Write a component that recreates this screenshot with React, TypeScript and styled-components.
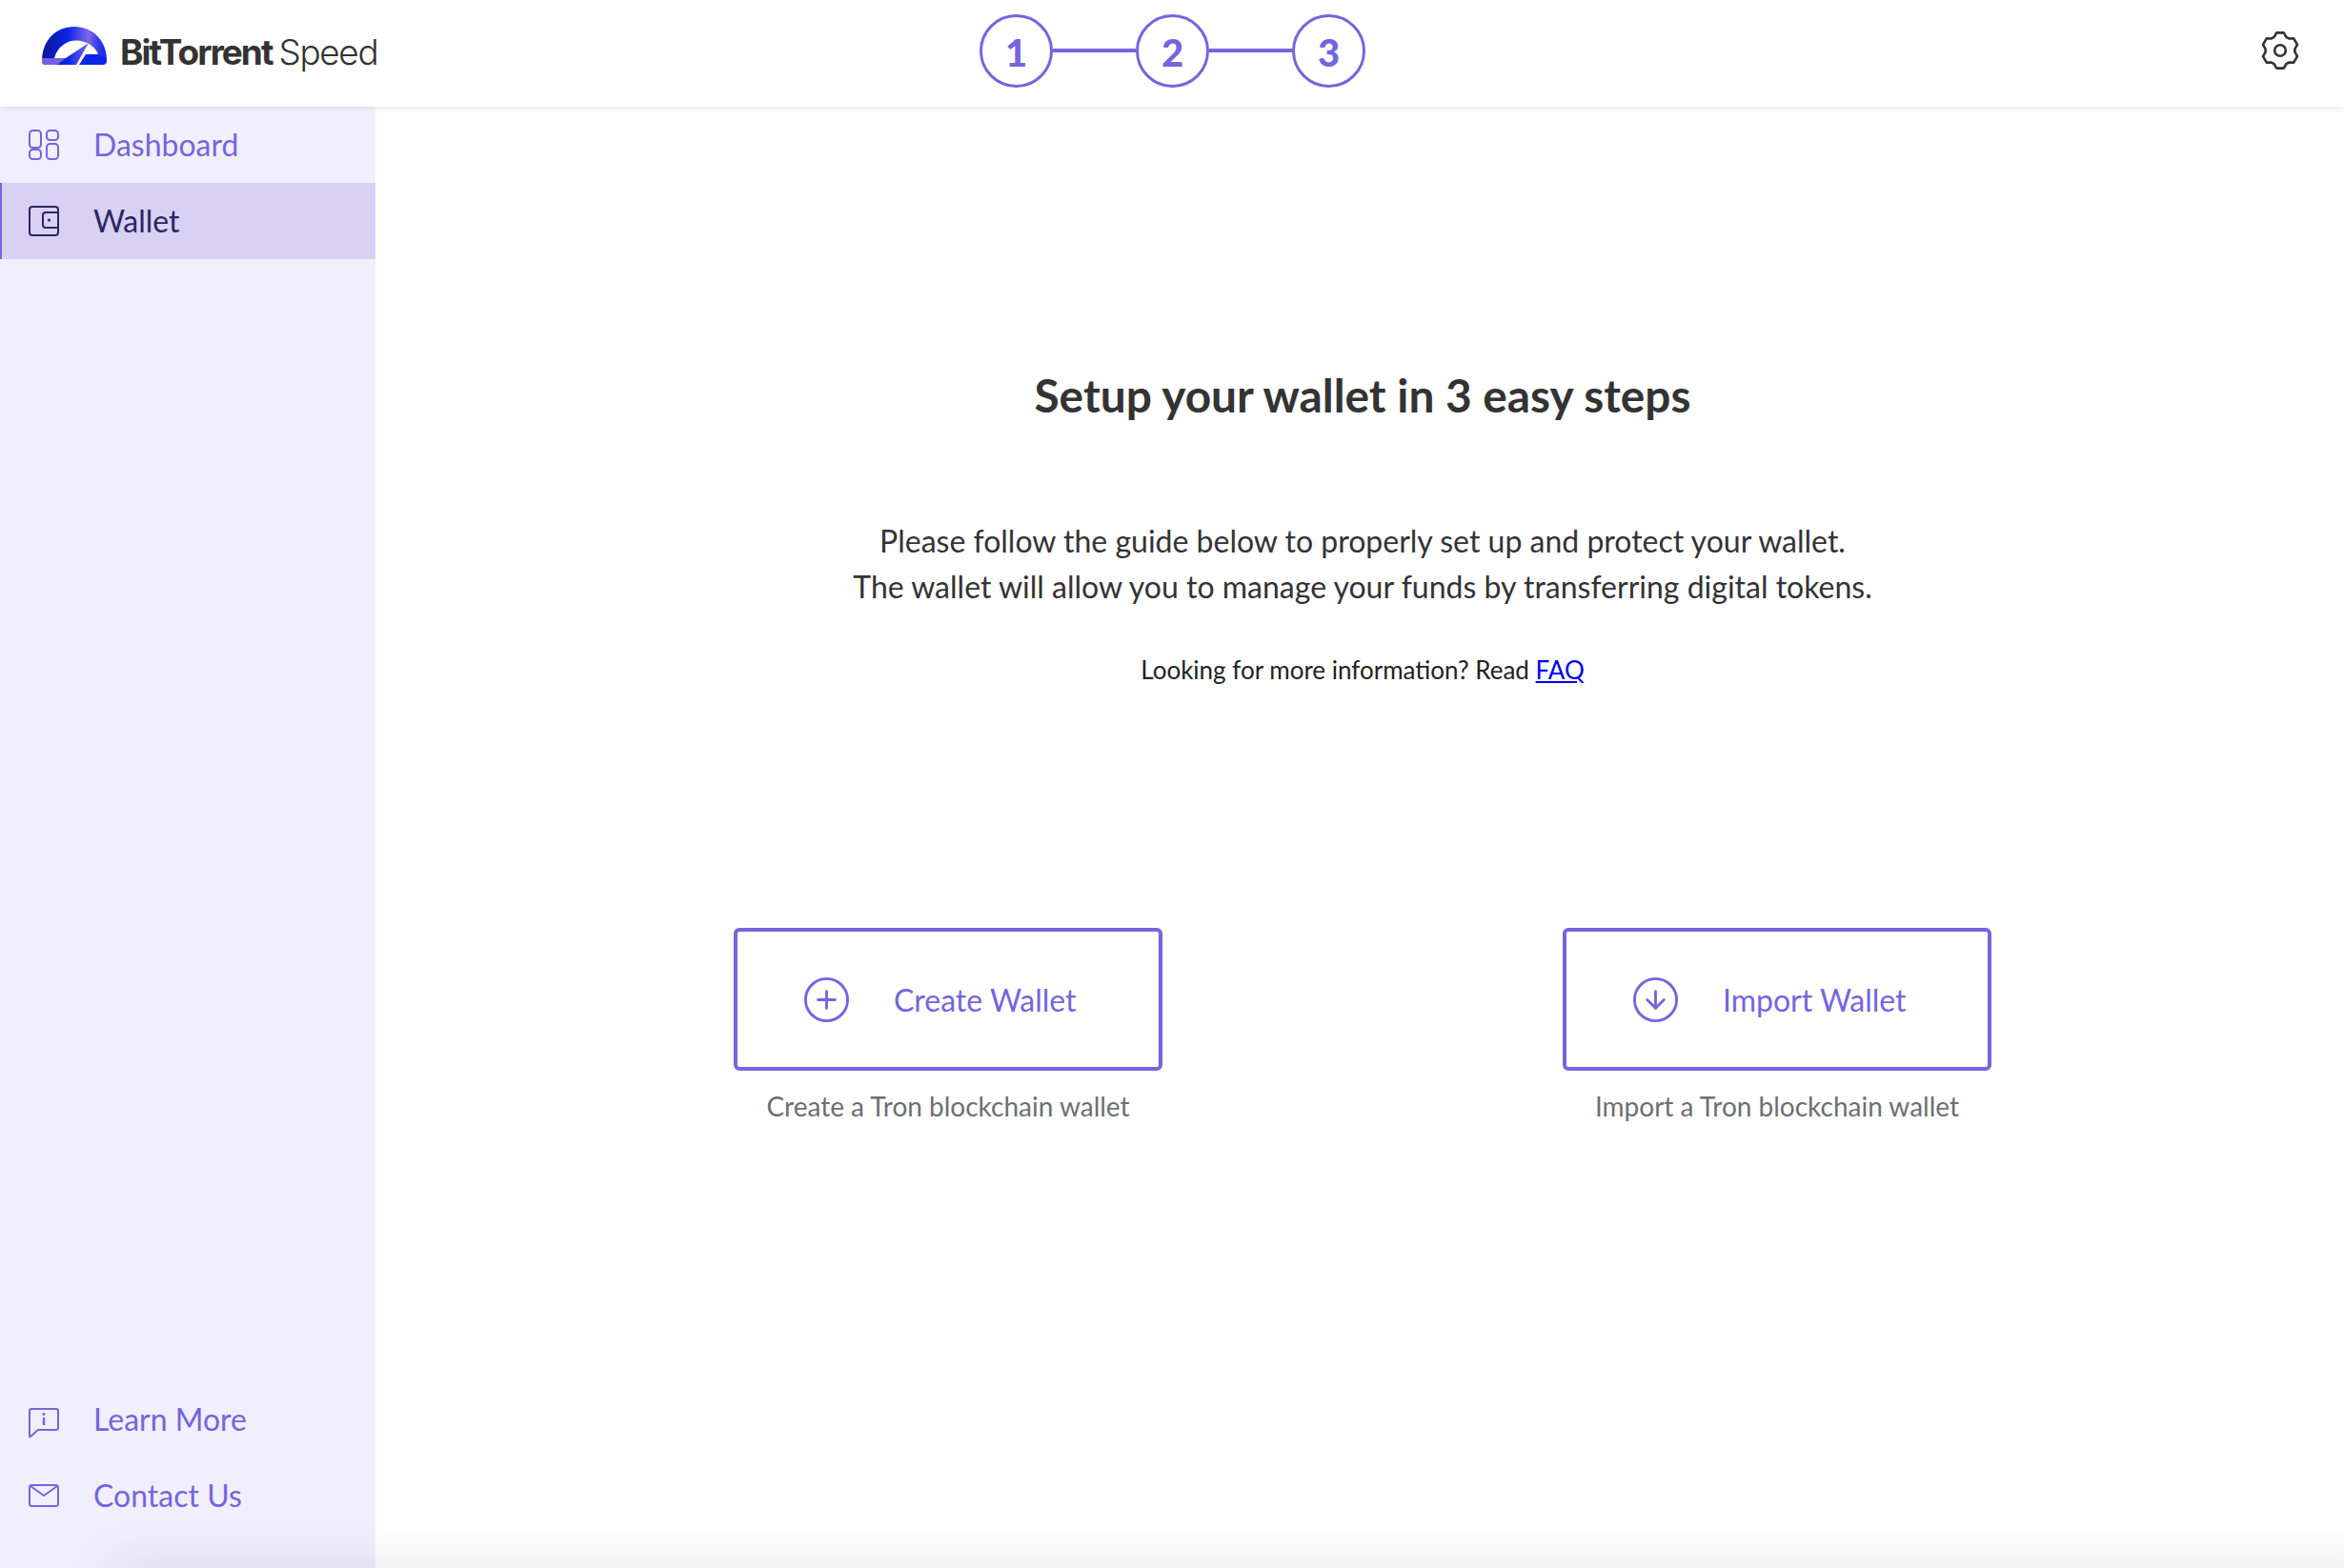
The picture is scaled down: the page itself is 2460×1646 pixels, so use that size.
import React from 'react';
import styled, { createGlobalStyle } from 'styled-components';
import { CirclePlus, CircleArrowDown } from 'lucide-react';

const purple = '#7565de';

const GlobalStyle = createGlobalStyle`
  html, body {
    margin: 0;
    height: 100%;
    overflow: hidden;
    background: #fff;
    font-family: 'Lato', 'Liberation Sans', sans-serif;
  }
  #root { height: 100%; }
`;

const Page = styled.div`
  position: relative;
  height: 1646px;
  display: flex;
  flex-direction: column;
  overflow: hidden;
`;

const Header = styled.header`
  position: relative;
  z-index: 2;
  height: 112px;
  box-sizing: border-box;
  flex: none;
  display: grid;
  grid-template-columns: 1fr auto 1fr;
  align-items: center;
  padding: 0 43px 6px 44px;
  background: #fff;
  box-shadow: 0 1px 6px rgba(0, 0, 0, 0.1);
`;

const Brand = styled.div`
  display: flex;
  align-items: center;
  gap: 14px;
  height: 40px;
  margin-bottom: 10px;
`;

const BrandName = styled.span`
  font-family: 'Inter', sans-serif;
  font-size: 37px;
  font-weight: 700;
  letter-spacing: -2px;
  color: #333;
  margin-top: 12px;
`;

const BrandLight = styled.span`
  font-weight: 300;
  margin-left: 7px;
  letter-spacing: -1.4px;
`;

const Stepper = styled.div`
  display: flex;
  align-items: center;
`;

const StepCircle = styled.div`
  width: 77px;
  height: 77px;
  box-sizing: border-box;
  border: 3px solid ${purple};
  border-radius: 50%;
  display: flex;
  align-items: center;
  justify-content: center;
  padding-top: 3px;
  color: ${purple};
  font-family: 'Lato', sans-serif;
  font-size: 40px;
  font-weight: 900;
`;

const StepLine = styled.div`
  width: 87px;
  height: 4px;
  background: ${purple};
`;

const SettingsButton = styled.div`
  justify-self: end;
  display: flex;
  margin-right: 3px;
`;

const Body = styled.div`
  flex: 1;
  display: flex;
  min-height: 0;
`;

const Sidebar = styled.nav`
  width: 394px;
  flex: none;
  display: flex;
  flex-direction: column;
  justify-content: space-between;
  padding-bottom: 36px;
  box-sizing: border-box;
  background: #f1effd;
`;

const NavGroup = styled.div`
  display: flex;
  flex-direction: column;
`;

const NavItem = styled.div<{ $active?: boolean }>`
  height: 80px;
  display: flex;
  align-items: center;
  gap: 36px;
  padding-left: 30px;
  font-size: 32px;
  color: ${(p) => (p.$active ? '#2d2560' : purple)};
  background: ${(p) => (p.$active ? '#d8d1f3' : 'transparent')};
  box-shadow: ${(p) => (p.$active ? `inset 2px 0 0 ${purple}` : 'none')};
`;

const NavLabel = styled.span`
  margin-top: -1px;
`;

const LearnSvg = styled.svg`
  margin-top: 7px;
`;

const Main = styled.main`
  flex: 1;
  display: flex;
  flex-direction: column;
  align-items: center;
  padding: 273px 0 0 6px;
  color: #333;
`;

const Title = styled.h1`
  margin: 0;
  font-size: 47.8px;
  line-height: 60px;
  font-weight: 700;
`;

const Intro = styled.p`
  margin: 99px 0 0;
  font-size: 32px;
  line-height: 48px;
  text-align: center;
`;

const Faq = styled.p`
  margin: 47px 0 0;
  font-size: 26px;
  line-height: 32px;
  color: #222;

  a {
    color: #0000ee;
    text-decoration: underline;
  }
`;

const Actions = styled.div`
  display: flex;
  gap: 420px;
  margin-top: 255px;
`;

const Action = styled.div`
  width: 450px;
  display: flex;
  flex-direction: column;
  align-items: center;
`;

const WalletButton = styled.div`
  width: 100%;
  height: 150px;
  box-sizing: border-box;
  border: 4px solid ${purple};
  border-radius: 6px;
  display: flex;
  align-items: center;
  gap: 44px;
  padding-left: 67px;
  color: ${purple};
  font-size: 32px;
`;

const Caption = styled.div`
  margin-top: 20px;
  font-size: 28px;
  line-height: 34px;
  color: #6c6f73;
`;

const BottomGlow = styled.div`
  position: absolute;
  left: 120px;
  right: -40px;
  top: 100%;
  height: 20px;
  box-shadow: 0 0 48px 8px rgba(0, 0, 0, 0.09);
`;

function LogoMark() {
  return (
    <svg width="68" height="40" viewBox="0 0 68 40">
      <defs>
        <linearGradient id="arch" x1="0" y1="0" x2="1" y2="0">
          <stop offset="0" stopColor="#0a1694" />
          <stop offset="0.4" stopColor="#0a25e6" />
          <stop offset="0.72" stopColor="#7d68ea" />
          <stop offset="0.86" stopColor="#3a3ce6" />
          <stop offset="1" stopColor="#0a25e6" />
        </linearGradient>
      </defs>
      <path d="M0 36C0 14 15 0 34 0C53 0 68 14 68 36Q68 40 64 40H4Q0 40 0 36Z" fill="url(#arch)" />
      <path d="M0 33H25L16 40H4Q0 40 0 36Z" fill="#7560e2" />
      <path d="M46 29H59L66 33V36Q66 40 62 40H39Z" fill="#0a25e6" />
      <path d="M13 33C16 22 25 14.5 36 14.5C47 14.5 56 21 59 29H46L39 40H36L49 17L25 33Z" fill="#fff" />
    </svg>
  );
}

// six-tooth outline, teeth at top/bottom and on the diagonals
function gearPoints() {
  const pts: string[] = [];
  for (let i = 0; i < 6; i++) {
    const a = (i * 60 - 90) * (Math.PI / 180);
    [
      [15.5, -0.42],
      [19, -0.2],
      [19, 0.2],
      [15.5, 0.42],
    ].forEach(([r, d]) => {
      pts.push(`${(21 + r * Math.cos(a + d)).toFixed(2)},${(21 + r * Math.sin(a + d)).toFixed(2)}`);
    });
  }
  return pts.join(' ');
}

function GearIcon() {
  return (
    <svg width="42" height="42" viewBox="0 0 42 42" fill="none" stroke="#333" strokeWidth="2.6" strokeLinejoin="round">
      <polygon points={gearPoints()} />
      <circle cx="21" cy="21" r="5.8" />
    </svg>
  );
}

function DashboardIcon() {
  return (
    <svg width="32" height="32" viewBox="0 0 32 32" fill="none" stroke="currentColor" strokeWidth="2">
      <rect x="1" y="1" width="12" height="18" rx="3.5" />
      <rect x="19" y="1" width="12" height="10" rx="3.5" />
      <rect x="1" y="21" width="12" height="10" rx="3.5" />
      <rect x="19" y="15" width="12" height="16" rx="3.5" />
    </svg>
  );
}

function WalletIcon() {
  return (
    <svg width="32" height="32" viewBox="0 0 32 32" fill="none" stroke="currentColor" strokeWidth="2">
      <rect x="1" y="1" width="30" height="30" rx="3" />
      <path d="M31 7H18Q15 7 15 10V20Q15 23 18 23H31" />
      <circle cx="21.5" cy="15" r="1.6" fill="currentColor" stroke="none" />
    </svg>
  );
}

function LearnIcon() {
  return (
    <LearnSvg width="32" height="32" viewBox="0 0 32 32" fill="none" stroke="currentColor" strokeWidth="2" strokeLinejoin="round">
      <path d="M3 1H29Q31 1 31 3V21Q31 23 29 23H10L2 30Q1 31 1 29V3Q1 1 3 1Z" />
      <path d="M16 10V18" strokeWidth="2.4" />
      <circle cx="16" cy="6.5" r="1.5" fill="currentColor" stroke="none" />
    </LearnSvg>
  );
}

function MailIcon() {
  return (
    <svg width="32" height="24" viewBox="0 0 32 24" fill="none" stroke="currentColor" strokeWidth="2" strokeLinejoin="round">
      <rect x="1" y="1" width="30" height="22" rx="2.5" />
      <path d="M2 2L16 12L30 2" />
    </svg>
  );
}

const topNav = [
  { label: 'Dashboard', icon: <DashboardIcon /> },
  { label: 'Wallet', icon: <WalletIcon />, active: true },
];

const bottomNav = [
  { label: 'Learn More', icon: <LearnIcon /> },
  { label: 'Contact Us', icon: <MailIcon /> },
];

export default function App() {
  return (
    <Page>
      <GlobalStyle />
      <Header>
        <Brand>
          <LogoMark />
          <BrandName>
            BitTorrent<BrandLight>Speed</BrandLight>
          </BrandName>
        </Brand>
        <Stepper>
          <StepCircle>1</StepCircle>
          <StepLine />
          <StepCircle>2</StepCircle>
          <StepLine />
          <StepCircle>3</StepCircle>
        </Stepper>
        <SettingsButton>
          <GearIcon />
        </SettingsButton>
      </Header>
      <Body>
        <Sidebar>
          <NavGroup>
            {topNav.map((item) => (
              <NavItem key={item.label} $active={item.active}>
                {item.icon}
                <NavLabel>{item.label}</NavLabel>
              </NavItem>
            ))}
          </NavGroup>
          <NavGroup>
            {bottomNav.map((item) => (
              <NavItem key={item.label}>
                {item.icon}
                <NavLabel>{item.label}</NavLabel>
              </NavItem>
            ))}
          </NavGroup>
        </Sidebar>
        <Main>
          <Title>Setup your wallet in 3 easy steps</Title>
          <Intro>
            Please follow the guide below to properly set up and protect your wallet.
            <br />
            The wallet will allow you to manage your funds by transferring digital tokens.
          </Intro>
          <Faq>
            Looking for more information? Read <a href="#faq">FAQ</a>
          </Faq>
          <Actions>
            <Action>
              <WalletButton>
                <CirclePlus size={53} strokeWidth={1.3} />
                Create Wallet
              </WalletButton>
              <Caption>Create a Tron blockchain wallet</Caption>
            </Action>
            <Action>
              <WalletButton>
                <CircleArrowDown size={53} strokeWidth={1.3} />
                Import Wallet
              </WalletButton>
              <Caption>Import a Tron blockchain wallet</Caption>
            </Action>
          </Actions>
        </Main>
      </Body>
      <BottomGlow />
    </Page>
  );
}
